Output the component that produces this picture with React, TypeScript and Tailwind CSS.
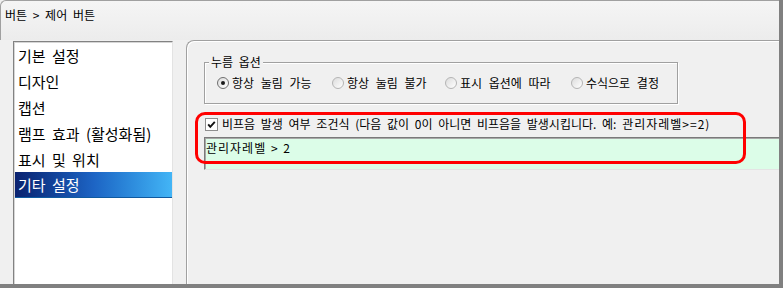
import React from "react";

const MENU = ["기본 설정", "디자인", "캡션", "램프 효과 (활성화됨)", "표시 및 위치", "기타 설정"];
const SELECTED = 5;

const OPTIONS = [
  { label: "항상 눌림 가능", width: "w-[115px]", checked: true },
  { label: "항상 눌림 불가", width: "w-[113px]", checked: false },
  { label: "표시 옵션에 따라", width: "w-[126px]", checked: false },
  { label: "수식으로 결정", width: "w-[100px]", checked: false },
];

function Radio({ checked }: { checked: boolean }) {
  return (
    <span
      className={`flex h-[12px] w-[12px] shrink-0 items-center justify-center rounded-full border bg-gradient-to-br from-[#dcdcdc] to-white ${
        checked ? "border-[#6f6f6f]" : "border-[#b4b4b4]"
      }`}
    >
      {checked && <span className="h-[4px] w-[4px] rounded-full bg-[#1a1a1a]" />}
    </span>
  );
}

function Checkbox() {
  return (
    <span className="flex h-[13px] w-[13px] shrink-0 items-center justify-center border border-[#8e8e8e] bg-white">
      <svg width="11" height="11" viewBox="0 0 11 11">
        <path d="M2.2 5.3 L4.3 7.8 L8.8 2.8" fill="none" stroke="#111" strokeWidth="1.9" />
      </svg>
    </span>
  );
}

export default function App() {
  return (
    <div className="relative flex h-[288px] w-[783px] flex-col overflow-hidden bg-[#f0f0f0] font-['Noto_Sans_CJK_KR','Liberation_Sans',sans-serif] text-black [word-spacing:1px]">
      <div className="flex min-h-0 flex-1">
        <div className="flex min-w-0 flex-1 flex-col">
          {/* Title */}
          <div className="h-[40px] shrink-0 rounded-tl-[6px] border-l border-t border-[#a0a0a0] bg-gradient-to-b from-[#f5f5f5] to-[#ececec] pl-[4px] pt-[7px] text-[12px] leading-[14px] [word-spacing:3px]">
            버튼 &gt; 제어 버튼
          </div>

          <div className="flex min-h-0 flex-1">
            <div className="w-[13px] shrink-0" />

            {/* Category list */}
            <div className="mt-[1px] w-[160px] shrink-0 border-l border-r border-t border-l-[#828282] border-r-[#e3e3e3] border-t-[#828282] bg-white pl-[1px] shadow-[inset_1px_1px_0_#d6d6d6]">
              {MENU.map((item, i) => (
                <div
                  key={item}
                  className={`flex h-[26px] items-center pl-[3px] text-[15px] leading-none [word-spacing:3px] ${
                    i === SELECTED
                      ? "border-b border-[#0f5aa0] bg-gradient-to-r from-[#0a2270] via-[#1d64c4] to-[#43b5f6] text-white"
                      : ""
                  }`}
                >
                  {item}
                </div>
              ))}
            </div>

            <div className="w-[13px] shrink-0" />

            {/* Options panel */}
            <div className="min-w-0 flex-1 overflow-hidden rounded-tl-[8px] border-l border-t border-[#a0a0a0] pl-[17px] pt-[21px] shadow-[inset_1px_1px_0_#ffffff]">
              <div className="relative h-[42px] w-[474px] border border-[#a0a0a0] shadow-[1px_1px_0_#ffffff,inset_1px_1px_0_#ffffff]">
                <span className="absolute left-[4px] top-[-8px] bg-[#f0f0f0] px-[2px] text-[12px] leading-[14px] [word-spacing:3px]">
                  누름 옵션
                </span>
                <div className="mt-[13px] flex h-[14px] items-center pl-[12px] text-[12px] leading-[14px] [word-spacing:4px]">
                  {OPTIONS.map((opt) => (
                    <div key={opt.label} className={`flex shrink-0 items-center gap-[3px] ${opt.width}`}>
                      <Radio checked={opt.checked} />
                      <span className="whitespace-nowrap">{opt.label}</span>
                    </div>
                  ))}
                </div>
              </div>

              <div className="mt-[13px] flex h-[14px] items-center gap-[4px] pl-[1px] text-[12px] leading-[14px] [word-spacing:3px]">
                <Checkbox />
                <span className="whitespace-nowrap">
                  비프음 발생 여부 조건식 (다음 값이 0이 아니면 비프음을 발생시킵니다. 예:{" "}
                  <span className="tracking-[1px]">관리자레벨&gt;=2)</span>
                </span>
              </div>

              <div className="mt-[6px] h-[33px] w-[640px] border-b border-l border-t border-b-[#e4e4e4] border-l-[#7a7a7a] border-t-[#7a7a7a] bg-[#dcfde8] pl-[1px] pt-[3px] text-[12px] leading-[14px] tracking-[1px] shadow-[inset_1px_1px_0_#a8a8a8]">
                관리자레벨 &gt; 2
              </div>
            </div>
          </div>
        </div>
        <div className="w-[4px] shrink-0 bg-[#808080]" />
      </div>
      <div className="h-[4px] shrink-0 bg-[#808080]" />

      {/* Highlight annotation */}
      <div className="pointer-events-none absolute left-[195px] top-[112px] h-[52px] w-[551px] rounded-[10px] border-[3px] border-[#ff0000]" />
    </div>
  );
}
